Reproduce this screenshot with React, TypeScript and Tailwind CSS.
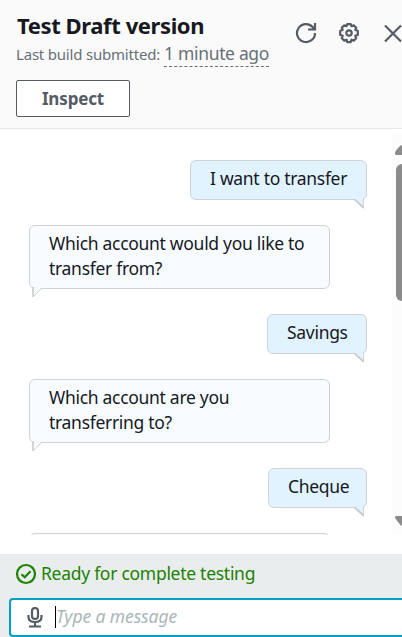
import type { ReactNode } from "react";

type Message = { from: "user" | "bot"; text: string; width: string };

const messages: Message[] = [
  { from: "user", text: "I want to transfer", width: "w-[177px]" },
  { from: "bot", text: "Which account would you like to transfer from?", width: "w-[301px]" },
  { from: "user", text: "Savings", width: "w-[100px]" },
  { from: "bot", text: "Which account are you transferring to?", width: "w-[301px]" },
  { from: "user", text: "Cheque", width: "w-[99px]" },
  { from: "bot", text: "", width: "w-[301px]" },
];

function Bubble({ message }: { message: Message }) {
  const user = message.from === "user";
  return (
    <div
      className={`relative shrink-0 rounded-md border border-[#d0d2d4] pt-[5px] pl-[19px] text-[17.5px] leading-[25px] tracking-[-0.3px] text-[#16191f] ${message.width} ${user ? "h-10 self-end bg-[#e1f3fe] whitespace-nowrap" : "h-16 self-start bg-[#f8fcff] pr-4"}`}
    >
      {message.text}
      {user ? (
        <svg className="absolute right-[1px] bottom-[-10px]" width="11" height="11" viewBox="0 0 11 11">
          <path d="M0 0H9.500V9Z" fill="#e1f3fe" />
          <path d="M0.500 1.300L9.300 9.500" fill="none" stroke="#c8cacc" strokeWidth="1.800" />
          <path d="M9.500 0V10.500" stroke="#d0d2d4" strokeWidth="1" />
        </svg>
      ) : (
        <svg className="absolute bottom-[-10px] left-[2px]" width="11" height="11" viewBox="0 0 11 11">
          <path d="M1 0H10L1 9Z" fill="#f8fcff" />
          <path d="M1 0V10" stroke="#c8cacc" strokeWidth="1.600" />
          <path d="M1 10L10 1" stroke="#d0d2d4" strokeWidth="1" />
        </svg>
      )}
    </div>
  );
}

function IconBox({ children }: { children: ReactNode }) {
  return (
    <svg width="22" height="22" viewBox="0 0 22 22" fill="none" stroke="#545b64" strokeWidth="2.2" className="shrink-0">
      {children}
    </svg>
  );
}

export default function App() {
  return (
    <div className="flex h-[637px] w-[402px] flex-col overflow-hidden bg-white font-['Noto_Sans','Open_Sans',sans-serif]">
      <header className="flex h-[129px] shrink-0 justify-between border-b border-[#e3e8e8] bg-[#fafafa] pl-4">
        <div className="flex flex-col items-start pt-[10px]">
          <h1 className="h-[31px] pl-px text-[22px] leading-[30px] font-bold tracking-[-0.4px] whitespace-nowrap text-[#16191f]">Test Draft version</h1>
          <div className="flex h-[26px] items-baseline whitespace-nowrap text-[#687078]">
            <span className="text-[15px] leading-[24px] tracking-[-0.2px]">Last build submitted:</span>
            <span className="ml-1 h-[26px] border-b border-dashed border-[#687078] text-[17.5px] leading-[24px] tracking-[-0.33px]">1 minute ago</span>
          </div>
          <button className="mt-[13px] h-[37px] w-[114px] rounded-xs border border-[#545b64] bg-white pb-[1px] text-[17px] leading-[33px] font-bold tracking-[-0.15px] text-[#545b64]">Inspect</button>
        </div>
        <div className="-mr-[2px] flex gap-[21px] pt-[22px] pr-px">
          <IconBox>
            <path d="M20 11A9 9 0 1 1 17.600 5L20 7.500" />
            <path d="M20 1V7.500H13" />
            <path d="M16 7.500L20 4V7.500Z" fill="#545b64" stroke="none" />
          </IconBox>
          <IconBox>
            <circle cx="11" cy="11" r="2.700" />
            <path strokeLinejoin="round" d="M9.300 2.100h3.400l.8 2.100 2.200-.9 2.500 2.500-.9 2.100 2.500.8v4.200l-2.500.9.9 2.400-2.500 2.500-2.200-1-.8 2.400H9.300l-.8-2.400-2.200 1L3.800 16.200l.9-2.400L2.200 12.900V8.700l2.500-.8-.9-2.100 2.500-2.500 2.200.9Z" />
          </IconBox>
          <IconBox>
            <path d="M4 3.500L20 19.500M20 3.500L4 19.500" />
          </IconBox>
        </div>
      </header>

      <main className="flex h-[406px] shrink-0 overflow-hidden">
        <div className="flex w-[367px] shrink-0 flex-col gap-[25px] pt-[31px] pl-[29px]">
          {messages.map((m, i) => (
            <Bubble key={i} message={m} />
          ))}
        </div>
        <div className="mt-[6px] ml-[25px] flex w-[10px] flex-col items-end bg-[#fcfcfc] pt-[10px]">
          <svg width="7" height="10" viewBox="0 0 7 10">
            <path d="M0 8Q0 6 5 1L7 0V10H1Q0 10 0 8Z" fill="#8b8b8b" />
          </svg>
          <div className="mt-[9px] h-[137px] w-[6px] rounded-l-md bg-[#8b8b8b]" />
          <svg className="mt-[215px]" width="7" height="10" viewBox="0 0 7 10">
            <path d="M0 2Q0 0 1 0H7V10Q5 9 0 2Z" fill="#8b8b8b" />
          </svg>
        </div>
      </main>

      <footer className="mt-[19px] flex h-[83px] shrink-0 flex-col bg-[#e9eded]">
        <div className="flex h-[44px] items-center gap-[4px] pb-[4px] pl-[15px] text-[#1d8102]">
          <svg width="22" height="22" viewBox="0 0 22 22" fill="none" stroke="#1d8102" strokeWidth="2.200">
            <circle cx="11" cy="11" r="9" />
            <path d="M6.500 11.200L9.700 14.200L15.500 8.300" />
          </svg>
          <span className="-mt-[3px] text-[17.5px] leading-6 tracking-[-0.28px] whitespace-nowrap">Ready for complete testing</span>
        </div>
        <div className="ml-[9px] flex h-[39px] shrink-0 items-center rounded-l-sm border-2 border-r-0 border-[#00a1c9] bg-white pb-[2px]">
          <svg className="ml-4" width="17" height="22" viewBox="0 0 17 22" fill="none" stroke="#545b64" strokeWidth="2.200">
            <rect x="5" y="2" width="6" height="11" rx="3" />
            <path d="M1.500 9V11Q1.500 16 8 16Q14.500 16 14.500 11V9M8 16V20M2 20.500H14" />
          </svg>
          <div className="ml-[11px] h-[22px] w-px bg-black" />
          <span className="-mt-px text-[17.5px] leading-6 tracking-[-0.1px] whitespace-nowrap text-[#aab7b8] italic">Type a message</span>
        </div>
      </footer>
    </div>
  );
}
